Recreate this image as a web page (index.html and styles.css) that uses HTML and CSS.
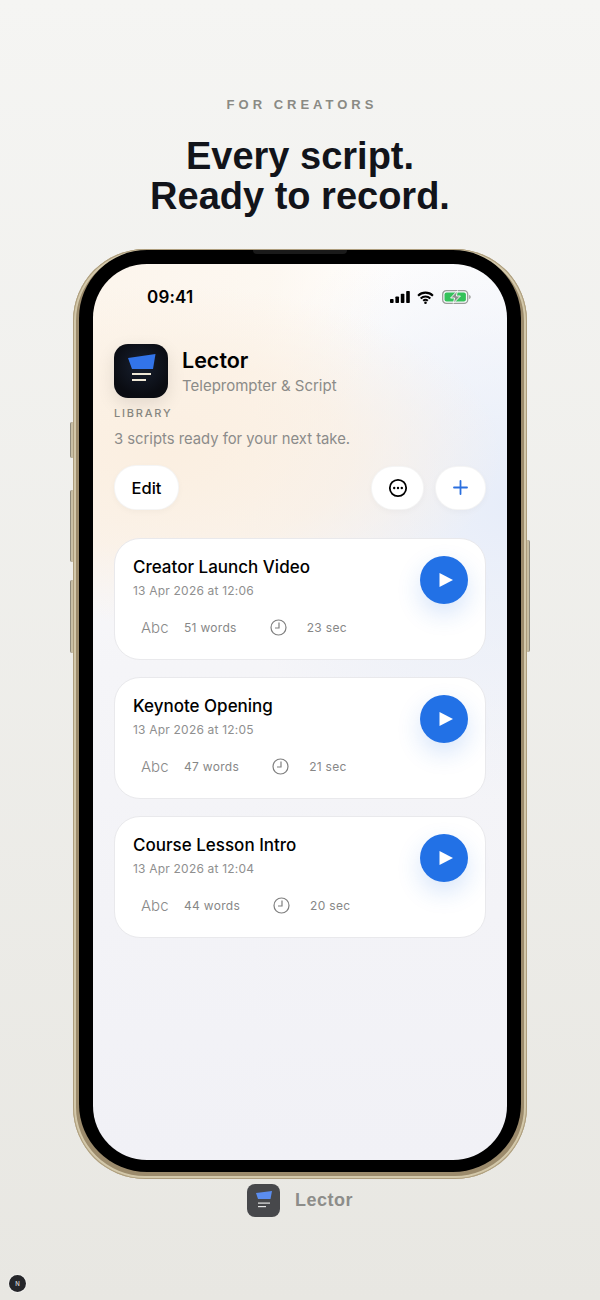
FILE: index.html
```html
<!DOCTYPE html>
<html>
<head>
<meta charset="utf-8">
<title>Lector</title>
<link rel="stylesheet" href="styles.css">
</head>
<body>
<div class="page">
	<p class="eyebrow">FOR CREATORS</p>
	<h1 class="headline">Every script.<br>Ready to record.</h1>

	<div class="phone">
		<span class="side side-mute"></span>
		<span class="side side-up"></span>
		<span class="side side-down"></span>
		<span class="side side-power"></span>
		<div class="bezel">
			<span class="notch"></span>
			<div class="screen">
				<div class="status">
					<span class="time">09:41</span>
					<span class="status-icons">
						<svg class="icon-signal" width="20" height="12" viewBox="0 0 20 12"><rect x="0" y="8" width="3.6" height="4" rx=".8"/><rect x="5.4" y="5.5" width="3.6" height="6.5" rx=".8"/><rect x="10.8" y="2.8" width="3.6" height="9.2" rx=".8"/><rect x="16.2" y="0" width="3.6" height="12" rx=".8"/></svg>
						<svg class="icon-wifi" width="17" height="13" viewBox="0 0 18 14"><path d="M1 5a11.5 11.5 0 0 1 16 0M3.8 8a7.5 7.5 0 0 1 10.4 0M6.5 10.6a3.6 3.6 0 0 1 5 0" fill="none" stroke="#000" stroke-width="2.2"/><circle cx="9" cy="12.6" r="1.4"/></svg>
						<svg width="29" height="14" viewBox="0 0 29 14"><rect x=".7" y=".7" width="25" height="12.6" rx="3.6" fill="none" stroke="#9a9d99" stroke-width="1.3"/><rect x="2.5" y="2.5" width="21.4" height="9" rx="2" fill="#34c25a"/><path d="M27.2 5v4c.9-.3 1.5-1 1.5-2s-.6-1.7-1.5-2z" fill="#9a9d99"/><path d="M15.5 .6 8.6 8h4l-1.3 5.4L18.4 6h-4z" fill="#8b8f8b" stroke="#fff" stroke-width=".9"/></svg>
					</span>
				</div>

				<div class="brand">
					<div class="app-icon">
						<svg width="54" height="54" viewBox="0 0 54 54"><path d="M14 14 41.5 10 39 25 18 25z" fill="#3274ea"/><rect x="18" y="29" width="19" height="2" fill="#efe8d6"/><rect x="18" y="35" width="14" height="2" fill="#efe8d6"/></svg>
					</div>
					<div class="brand-text">
						<div class="brand-name">Lector</div>
						<div class="brand-sub">Teleprompter &amp; Script</div>
					</div>
				</div>

				<div class="library-label">LIBRARY</div>
				<p class="library-note">3 scripts ready for your next take.</p>

				<div class="toolbar">
					<button class="btn btn-edit">Edit</button>
					<div class="toolbar-right">
						<button class="btn btn-icon">
							<svg width="20" height="20" viewBox="0 0 20 20"><circle cx="10" cy="10" r="8.2" fill="none" stroke="#000" stroke-width="1.8"/><circle cx="6.2" cy="10" r="1.2"/><circle cx="10" cy="10" r="1.2"/><circle cx="13.8" cy="10" r="1.2"/></svg>
						</button>
						<button class="btn btn-icon btn-add">
							<svg width="15" height="15" viewBox="0 0 15 15"><path d="M7.5 1v13M1 7.5h13" stroke="#2a6fdf" stroke-width="1.8" stroke-linecap="round"/></svg>
						</button>
					</div>
				</div>

				<div class="cards">
					<div class="card">
						<div class="card-title">Creator Launch Video</div>
						<div class="card-date">13 Apr 2026 at 12:06</div>
						<div class="card-meta">
							<span class="abc">Abc</span>
							<span>51 words</span>
							<svg class="clock" width="17" height="17" viewBox="0 0 17 17"><circle cx="8.5" cy="8.5" r="7.5" fill="none" stroke="#7f7f7f" stroke-width="1.2"/><path d="M9 3.5V9H5" fill="none" stroke="#7f7f7f" stroke-width="1.2"/></svg>
							<span>23 sec</span>
						</div>
						<span class="play"><svg width="16" height="16" viewBox="0 0 16 16"><path d="M1.5 1v14L15 8z" fill="#fff"/></svg></span>
					</div>
					<div class="card">
						<div class="card-title">Keynote Opening</div>
						<div class="card-date">13 Apr 2026 at 12:05</div>
						<div class="card-meta">
							<span class="abc">Abc</span>
							<span>47 words</span>
							<svg class="clock" width="17" height="17" viewBox="0 0 17 17"><circle cx="8.5" cy="8.5" r="7.5" fill="none" stroke="#7f7f7f" stroke-width="1.2"/><path d="M9 3.5V9H5" fill="none" stroke="#7f7f7f" stroke-width="1.2"/></svg>
							<span>21 sec</span>
						</div>
						<span class="play"><svg width="16" height="16" viewBox="0 0 16 16"><path d="M1.5 1v14L15 8z" fill="#fff"/></svg></span>
					</div>
					<div class="card">
						<div class="card-title">Course Lesson Intro</div>
						<div class="card-date">13 Apr 2026 at 12:04</div>
						<div class="card-meta">
							<span class="abc">Abc</span>
							<span>44 words</span>
							<svg class="clock" width="17" height="17" viewBox="0 0 17 17"><circle cx="8.5" cy="8.5" r="7.5" fill="none" stroke="#7f7f7f" stroke-width="1.2"/><path d="M9 3.5V9H5" fill="none" stroke="#7f7f7f" stroke-width="1.2"/></svg>
							<span>20 sec</span>
						</div>
						<span class="play"><svg width="16" height="16" viewBox="0 0 16 16"><path d="M1.5 1v14L15 8z" fill="#fff"/></svg></span>
					</div>
				</div>
			</div>
		</div>
	</div>

	<div class="footer">
		<span class="footer-icon">
			<svg width="33" height="33" viewBox="0 0 33 33"><path d="M9 9 25 7 23.5 15 11 15z" fill="#5b8df0"/><rect x="11" y="18.5" width="12" height="1.2" fill="#e6e6e6"/><rect x="11" y="22" width="8" height="1.2" fill="#e6e6e6"/></svg>
		</span>
		<span class="footer-name">Lector</span>
	</div>

	<span class="dev-badge">N</span>
</div>
</body>
</html>
```

FILE: styles.css
```css
* {
	box-sizing: border-box;
	margin: 0;
	padding: 0;
}
body {
	font-family: Inter, "Liberation Sans", sans-serif;
	color: #000;
}
.page {
	background: linear-gradient(180deg, #f5f5f3 0%, #e8e7e2 100%);
	height: 1300px;
	overflow: hidden;
	padding-top: 97px;
	position: relative;
	width: 600px;
}
.eyebrow {
	color: #8a8a84;
	font-family: "Liberation Sans", sans-serif;
	font-size: 13px;
	font-weight: 700;
	letter-spacing: 4px;
	line-height: 15px;
	padding-left: 4px;
	text-align: center;
}
.headline {
	color: #12141a;
	font-family: "Liberation Sans", sans-serif;
	font-size: 38px;
	font-weight: 700;
	line-height: 40px;
	margin-top: 24px;
	text-align: center;
}

/* phone frame */
.phone {
	background: #9c8b6c;
	border-radius: 72px;
	box-shadow: inset 0 0 0 1px #ad9d7d, inset 0 0 0 3px #d3c8aa;
	height: 930px;
	margin: 33px auto 0;
	padding: 1px 6px 7px;
	position: relative;
	width: 454px;
}
.side {
	background: #c9bfa4;
	border-left: 1px solid #8e8a7c;
	border-radius: 2px 0 0 2px;
	left: -3px;
	position: absolute;
	width: 3px;
}
.side-mute { height: 36px; top: 173px; }
.side-up { height: 72px; top: 241px; }
.side-down { height: 73px; top: 331px; }
.side-power {
	border-left: 0;
	border-radius: 0 2px 2px 0;
	border-right: 1px solid #8e8a7c;
	height: 112px;
	left: 454px;
	top: 291px;
}
.bezel {
	background: #000;
	border-radius: 68px;
	height: 100%;
	padding: 14px 14px 12px;
	position: relative;
}
.notch {
	background: #1a1a1a;
	border-radius: 0 0 6px 6px;
	height: 4px;
	left: 174px;
	position: absolute;
	top: 0;
	width: 94px;
}
.screen {
	background:
		radial-gradient(340px 170px at 70px 190px, #fbefe1 0%, rgba(251, 239, 225, .7) 55%, rgba(251, 239, 225, 0) 100%),
		radial-gradient(300px 300px at 0 0, #fcf5ec 0%, rgba(252, 245, 236, .7) 60%, rgba(252, 245, 236, 0) 100%),
		radial-gradient(280px 300px at 100% 240px, #e7edf9 0%, rgba(231, 237, 249, 0) 100%),
		linear-gradient(180deg, #fffefd 0%, #f5f5f8 45%, #f1f1f6 100%);
	border-radius: 54px;
	height: 100%;
	overflow: hidden;
	padding: 0 21px;
}

/* status bar */
.status {
	align-items: center;
	display: flex;
	height: 34px;
	justify-content: space-between;
	margin-top: 16px;
	padding: 0 15px 0 33px;
}
.time {
	font-size: 17px;
	font-weight: 600;
	letter-spacing: .2px;
}
.status-icons {
	align-items: center;
	display: flex;
	gap: 7px;
}
.icon-wifi {
	margin-right: 1px;
}

/* brand */
.brand {
	align-items: center;
	display: flex;
	gap: 14px;
	margin-top: 30px;
}
.brand-text {
	padding-top: 2px;
}
.app-icon {
	background: radial-gradient(circle at 50% 40%, #182030 0%, #0a0c12 70%);
	border-radius: 14px;
	box-shadow: 0 6px 18px rgba(0, 0, 0, .1);
	height: 54px;
	width: 54px;
}
.brand-name {
	font-size: 21.5px;
	font-weight: 600;
	line-height: 27px;
}
.brand-sub {
	color: #8b8b88;
	font-size: 15px;
	line-height: 23px;
}
.library-label {
	color: #85857f;
	font-size: 11px;
	font-weight: 500;
	letter-spacing: 1.8px;
	line-height: 14px;
	margin-top: 8px;
}
.library-note {
	color: #8b8b8a;
	font-size: 14.8px;
	line-height: 18px;
	margin-top: 10px;
}

/* toolbar */
.toolbar {
	align-items: center;
	display: flex;
	justify-content: space-between;
	margin-top: 17px;
}
.toolbar-right {
	align-items: center;
	display: flex;
	gap: 11px;
}
.btn {
	align-items: center;
	background: #fff;
	border: 1px solid rgba(0, 0, 0, .04);
	border-radius: 22px;
	box-shadow: 0 2px 6px rgba(0, 0, 0, .03);
	display: flex;
	font-family: inherit;
	justify-content: center;
}
.btn-edit {
	font-size: 16.5px;
	font-weight: 500;
	height: 45px;
	width: 65px;
}
.btn-icon {
	height: 44px;
	width: 53px;
}
.btn-add {
	width: 51px;
}

/* script cards */
.cards {
	display: flex;
	flex-direction: column;
	gap: 17px;
	margin-top: 28px;
}
.card {
	background: #fff;
	border: 1px solid #e9e9ec;
	border-radius: 26px;
	height: 122px;
	padding: 17px 18px 0;
	position: relative;
}
.card-title {
	font-size: 17px;
	font-weight: 500;
	line-height: 22px;
}
.card-date {
	color: #8f8f8f;
	font-size: 12px;
	letter-spacing: .2px;
	line-height: 16px;
	margin-top: 5px;
}
.card-meta {
	align-items: center;
	color: #878787;
	display: flex;
	font-size: 12px;
	letter-spacing: .3px;
	margin-top: 19px;
	padding-left: 8px;
}
.abc {
	color: #8a8a8a;
	font-size: 15px;
	font-weight: 300;
	letter-spacing: 0;
	width: 43px;
}
.clock {
	margin: 0 20px 0 33px;
}
.play {
	align-items: center;
	background: #2271e6;
	border-radius: 50%;
	box-shadow: 0 10px 24px rgba(34, 113, 230, .18);
	display: flex;
	height: 48px;
	justify-content: center;
	padding-left: 3px;
	position: absolute;
	right: 17px;
	top: 17px;
	width: 48px;
}

/* footer */
.footer {
	align-items: center;
	display: flex;
	gap: 15px;
	justify-content: center;
	margin-top: 5px;
}
.footer-icon {
	background: #47484b;
	border-radius: 8px;
	height: 33px;
	width: 33px;
}
.footer-name {
	color: #8d8d8a;
	font-family: "Liberation Sans", sans-serif;
	font-size: 18px;
	font-weight: 700;
	letter-spacing: .5px;
}
.dev-badge {
	align-items: center;
	background: #25262a;
	border-radius: 50%;
	bottom: 8px;
	box-shadow: 0 0 0 1px rgba(255, 255, 255, .4);
	color: #eee;
	display: flex;
	font-size: 6px;
	height: 17px;
	justify-content: center;
	left: 9px;
	position: absolute;
	width: 17px;
}
```
